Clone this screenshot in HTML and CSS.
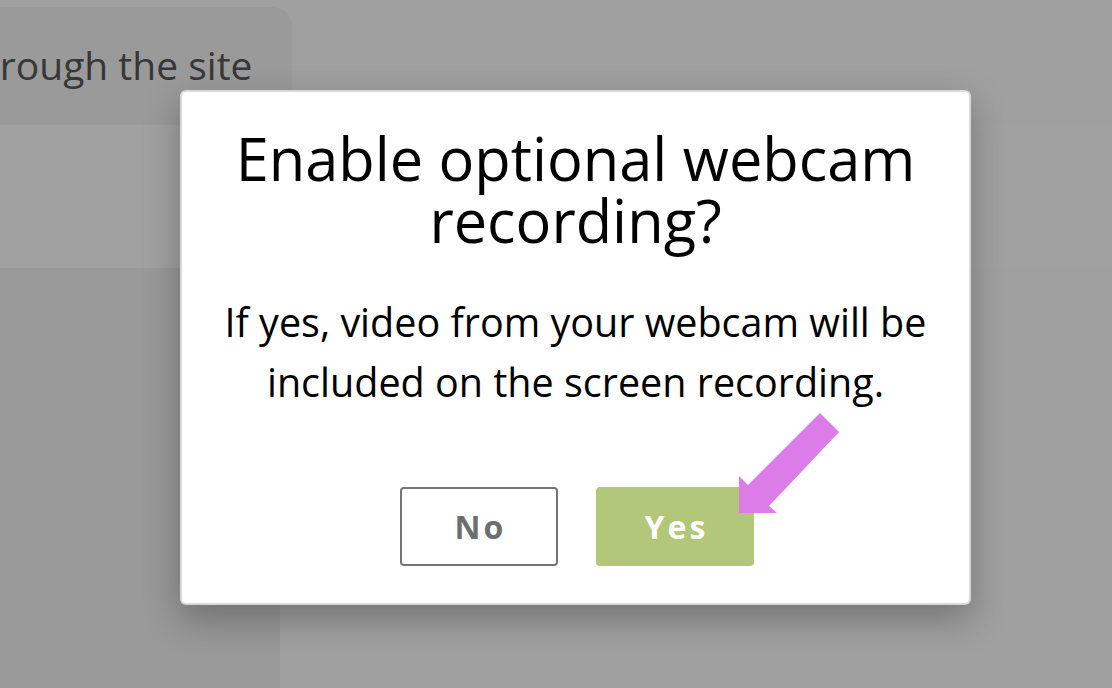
FILE: index.html
```html
<!DOCTYPE html>
<html lang="en">
<head>
<meta charset="utf-8">
<title>Webcam recording</title>
<link rel="stylesheet" href="styles.css">
</head>
<body>
<div class="page">
  <div class="bg-card"><p class="bg-text">through the site</p></div>
  <div class="bg-band"></div>
  <div class="bg-panel"></div>
</div>

<div class="modal" role="dialog" aria-labelledby="mtitle">
  <h1 class="modal-title" id="mtitle">Enable optional webcam recording?</h1>
  <p class="modal-text">If yes, video from your webcam will be included on the screen recording.</p>
  <div class="modal-actions">
    <button class="btn btn-no">No</button>
    <button class="btn btn-yes">Yes</button>
  </div>
</div>

<svg class="arrow" width="120" height="120" viewBox="730 405 120 120" aria-hidden="true">
  <polygon points="739,513 739,476 748,485 820,413 839,432 769,506 777,513" fill="#db7ce9"/>
</svg>
</body>
</html>
```

FILE: styles.css
```css
html, body {
  margin: 0;
  padding: 0;
}
body {
  width: 1112px;
  height: 688px;
  overflow: hidden;
  background: #a0a0a0;
  font-family: "Open Sans", "Noto Sans", sans-serif;
  position: relative;
}
.page {
  display: flex;
  flex-direction: column;
  height: 688px;
}
.bg-card {
  margin-top: 7px;
  margin-left: -60px;
  width: 352px;
  height: 118px;
  box-sizing: border-box;
  padding-left: 22px;
  background: #9a9a9a;
  border-radius: 20px;
  border-bottom-left-radius: 0;
  border-bottom-right-radius: 0;
}
.bg-text {
  margin: 0;
  padding-top: 30px;
  font-size: 39px;
  line-height: 56px;
  color: #373737;
  white-space: nowrap;
}
.bg-band {
  height: 143px;
  background: #a1a1a1;
}
.bg-panel {
  flex: 1;
  width: 280px;
  background: #999999;
}

.modal {
  position: absolute;
  left: 180px;
  top: 90px;
  width: 791px;
  height: 515px;
  box-sizing: border-box;
  background: #fff;
  border: 2px solid #d8d8d8;
  border-radius: 6px;
  box-shadow: 0 14px 36px rgba(0, 0, 0, 0.28);
  padding: 35px 30px 0;
  text-align: center;
  color: #000;
}
.modal-title {
  margin: 0;
  font-weight: 400;
  font-size: 59.5px;
  line-height: 62px;
}
.modal-text {
  margin: 41px 0 0;
  font-size: 39.5px;
  line-height: 60px;
}
.modal-actions {
  margin-top: 75px;
  padding-left: 3px;
  display: flex;
  justify-content: center;
  gap: 38px;
}
.btn {
  width: 158px;
  height: 79px;
  box-sizing: border-box;
  border-radius: 4px;
  font-family: "Open Sans", "Noto Sans", sans-serif;
  font-weight: 700;
  font-size: 32px;
  letter-spacing: 3px;
  padding: 0 0 0 3px;
  cursor: pointer;
}
.btn-no {
  background: #fff;
  border: 2px solid #757575;
  color: #6c6f71;
}
.btn-yes {
  background: #b2c779;
  border: 0;
  color: #fff;
}
.arrow {
  position: absolute;
  left: 730px;
  top: 405px;
}
```
